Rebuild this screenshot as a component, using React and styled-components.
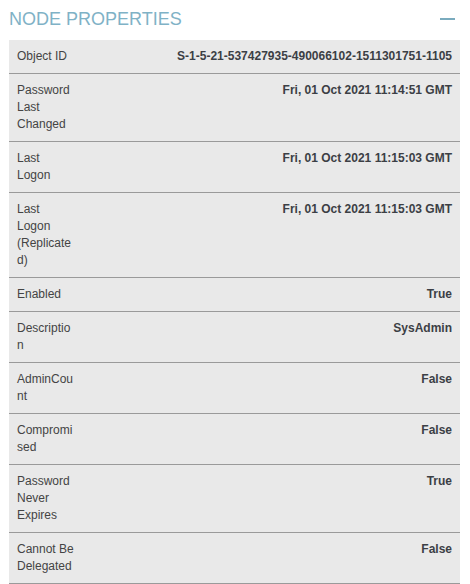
import React from 'react';
import styled, { createGlobalStyle } from 'styled-components';

const GlobalStyle = createGlobalStyle`
  body {
    margin: 0;
    background: #ffffff;
    font-family: "Liberation Sans", Arial, sans-serif;
  }
`;

const props = [
  ['Object ID', 'S-1-5-21-537427935-490066102-1511301751-1105'],
  ['Password Last Changed', 'Fri, 01 Oct 2021 11:14:51 GMT'],
  ['Last Logon', 'Fri, 01 Oct 2021 11:15:03 GMT'],
  ['Last Logon (Replicated)', 'Fri, 01 Oct 2021 11:15:03 GMT'],
  ['Enabled', 'True'],
  ['Description', 'SysAdmin'],
  ['AdminCount', 'False'],
  ['Compromised', 'False'],
  ['Password Never Expires', 'True'],
  ['Cannot Be Delegated', 'False'],
];

function App() {
  return (
    <>
      <GlobalStyle />
      <Panel>
        <Header>
          <Title>NODE PROPERTIES</Title>
          <Collapse />
        </Header>
        <Table>
          {props.map(([label, value]) => (
            <Row key={label}>
              <Label>{label}</Label>
              <Value>{value}</Value>
            </Row>
          ))}
        </Table>
      </Panel>
    </>
  );
}

const Panel = styled.div`
  padding: 0 10px 0 9px;
`;

const Header = styled.div`
  display: flex;
  justify-content: space-between;
  align-items: center;
  height: 40px;
`;

const Title = styled.h2`
  margin: 0;
  font-size: 18px;
  font-weight: 400;
  color: #7fb2c6;
  line-height: 20px;
  margin-top: -2px;
`;

const Collapse = styled.span`
  display: block;
  width: 15px;
  height: 2px;
  margin-right: 5px;
  margin-top: -3px;
  background: #7aabbe;
`;

const Table = styled.div`
  background: #e9e9e9;
`;

const Row = styled.div`
  display: flex;
  justify-content: space-between;
  padding: 8px;
  border-bottom: 1px solid #9a9a9a;
  font-size: 12px;
  line-height: 17px;
`;

const Label = styled.div`
  width: 58px;
  flex-shrink: 0;
  color: #444444;
  overflow-wrap: anywhere;
`;

const Value = styled.div`
  text-align: right;
  font-weight: 700;
  color: #3c3f45;
`;

export default App;
